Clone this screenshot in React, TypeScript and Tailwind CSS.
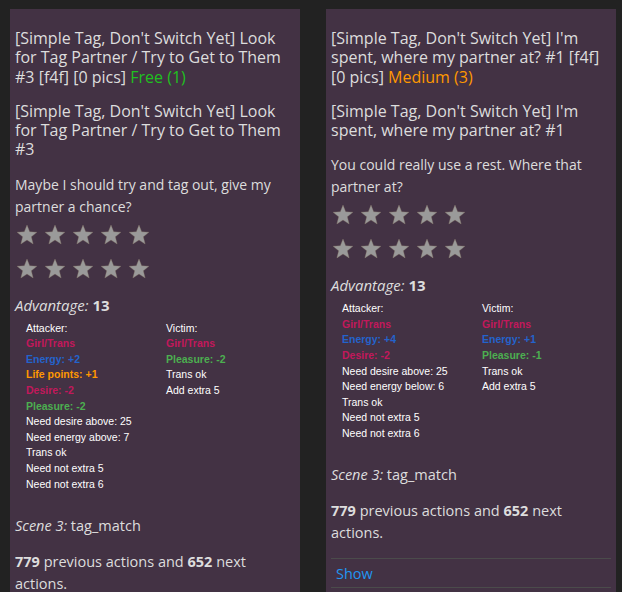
import React from 'react';

type Line = { text: string; color?: string };

type Card = {
  title: string;
  badge: string;
  badgeColor: string;
  name: string;
  desc: string;
  attacker: Line[];
  victim: Line[];
};

const PINK = 'font-bold text-[#c2185b]';
const BLUE = 'font-bold text-[#2463cc]';
const ORANGE = 'font-bold text-[#ff9800]';
const GREEN = 'font-bold text-[#4caf50]';

const cards: Card[] = [
  {
    title: "[Simple Tag, Don't Switch Yet] Look for Tag Partner / Try to Get to Them #3 [f4f] [0 pics]",
    badge: 'Free (1)',
    badgeColor: 'text-[#1fc01f]',
    name: "[Simple Tag, Don't Switch Yet] Look for Tag Partner / Try to Get to Them #3",
    desc: 'Maybe I should try and tag out, give my partner a chance?',
    attacker: [
      { text: 'Attacker:' },
      { text: 'Girl/Trans', color: PINK },
      { text: 'Energy: +2', color: BLUE },
      { text: 'Life points: +1', color: ORANGE },
      { text: 'Desire: -2', color: PINK },
      { text: 'Pleasure: -2', color: GREEN },
      { text: 'Need desire above: 25' },
      { text: 'Need energy above: 7' },
      { text: 'Trans ok' },
      { text: 'Need not extra 5' },
      { text: 'Need not extra 6' },
    ],
    victim: [
      { text: 'Victim:' },
      { text: 'Girl/Trans', color: PINK },
      { text: 'Pleasure: -2', color: GREEN },
      { text: 'Trans ok' },
      { text: 'Add extra 5' },
    ],
  },
  {
    title: "[Simple Tag, Don't Switch Yet] I'm spent, where my partner at? #1 [f4f] [0 pics]",
    badge: 'Medium (3)',
    badgeColor: 'text-[#ff9800]',
    name: "[Simple Tag, Don't Switch Yet] I'm spent, where my partner at? #1",
    desc: 'You could really use a rest. Where that partner at?',
    attacker: [
      { text: 'Attacker:' },
      { text: 'Girl/Trans', color: PINK },
      { text: 'Energy: +4', color: BLUE },
      { text: 'Desire: -2', color: PINK },
      { text: 'Need desire above: 25' },
      { text: 'Need energy below: 6' },
      { text: 'Trans ok' },
      { text: 'Need not extra 5' },
      { text: 'Need not extra 6' },
    ],
    victim: [
      { text: 'Victim:' },
      { text: 'Girl/Trans', color: PINK },
      { text: 'Energy: +1', color: BLUE },
      { text: 'Pleasure: -1', color: GREEN },
      { text: 'Trans ok' },
      { text: 'Add extra 5' },
    ],
  },
];

const Star = () => (
  <svg viewBox="0 0 24 24" className="w-[22px] h-[22px]">
    <polygon
      points="12,1.2 14.9,8.5 22.8,9 16.7,14 18.7,21.8 12,17.5 5.3,21.8 7.3,14 1.2,9 9.1,8.5"
      fill="#9a9a9a"
      stroke="#8a7a6a"
      strokeWidth="0.4"
    />
  </svg>
);

const StarRow = () => (
  <div className="h-[34px] flex items-center gap-[6px] pl-px">
    {[0, 1, 2, 3, 4].map((i) => (
      <Star key={i} />
    ))}
  </div>
);

const Column = ({ lines }: { lines: Line[] }) => (
  <div>
    {lines.map((l, i) => (
      <div key={i} className={`leading-[15.6px] ${l.color ?? 'text-white'}`}>
        {l.text}
      </div>
    ))}
  </div>
);

const ActionCard = ({ card, last }: { card: Card; last?: boolean }) => (
  <div className="w-[290px] shrink-0 bg-[#433244] px-[5px] pt-[20px] pb-6 text-[#dddddd]">
    <p className="text-[16px] leading-[19.3px]">
      {card.title} <span className={card.badgeColor}>{card.badge}</span>
    </p>
    <p className="mt-[15px] text-[16px] leading-[19.3px]">{card.name}</p>
    <p className="mt-[14px] text-[14px] leading-[22px]">{card.desc}</p>
    <StarRow />
    <StarRow />
    <p className="mt-[10px] text-[15px] leading-[19.3px]">
      <i>Advantage:</i> <b>13</b>
    </p>
    <div
      className="mt-[5.5px] pl-[11px] grid grid-cols-[140px_1fr] text-[10.5px]"
      style={{ fontFamily: '"Liberation Sans", Arial, sans-serif' }}
    >
      <Column lines={card.attacker} />
      <Column lines={card.victim} />
    </div>
    <p className="mt-[23.5px] text-[14.5px] leading-[19.3px]">
      <i>Scene 3:</i> tag_match
    </p>
    <p className="mt-[16px] text-[14.5px] leading-[22px]">
      <b>779</b> previous actions and <b>652</b> next actions.
    </p>
    {last && (
      <div className="mt-[14px] border-t border-b border-[#4b4b4b] h-[30px] flex items-center pl-[5px] text-[14.5px] text-[#2196f3]">
        Show
      </div>
    )}
  </div>
);

export default function App() {
  return (
    <div
      className="w-[622px] h-[592px] overflow-hidden bg-[#222222] flex gap-[26px] pl-[10px] pt-[9px]"
      style={{ fontFamily: '"Open Sans", "Noto Sans", sans-serif' }}
    >
      <ActionCard card={cards[0]} />
      <ActionCard card={cards[1]} last />
    </div>
  );
}
